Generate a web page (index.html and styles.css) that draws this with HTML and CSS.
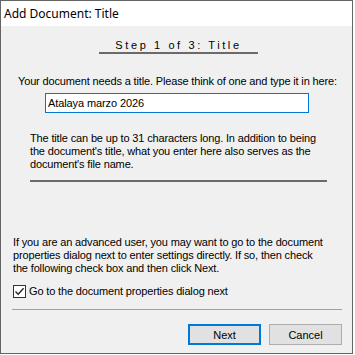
FILE: index.html
```html
<!DOCTYPE html>
<html>

<head>
    <title>Add Document: Title</title>
    <meta name="viewport" content="width=device-width, initial-scale=1.0">
    <link rel="stylesheet" href="styles.css">
</head>

<body>
    <div class="window">
        <div class="titlebar">Add Document: Title</div>
        <div class="content">
            <div class="step">Step 1 of 3: Title</div>

            <p class="ask">Your document needs a title. Please think of one and type it in here:</p>
            <div class="field">Atalaya marzo 2026</div>

            <p class="note">The title can be up to 31 characters long. In addition to being<br>the document's title, what you enter here also serves as the<br>document's file name.</p>
            <div class="rule"></div>

            <p class="advanced">If you are an advanced user, you may want to go to the document<br>properties dialog next to enter settings directly. If so, then check<br>the following check box and then click Next.</p>
            <label class="check">
                <span class="box">
                    <svg width="11" height="11" viewBox="0 0 11 11">
                        <path d="M1.5 5.5 L4.2 8.3 L9.6 2.2" fill="none" stroke="#222" stroke-width="1.3"/>
                    </svg>
                </span>
                Go to the document properties dialog next
            </label>

            <div class="footer">
                <button class="btn default">Next</button>
                <button class="btn">Cancel</button>
            </div>
        </div>
    </div>
</body>

</html>
```

FILE: styles.css
```css
body {
    margin: 0;
    background-color: #fff;
    font-family: 'Liberation Sans', Arial, sans-serif;
    font-size: 11px;
    color: #000;
}

.window {
    width: 351px;
    height: 352px;
    border: 1px solid #646464;
    background-color: #f0f0f0;
    display: flex;
    flex-direction: column;
}

.titlebar {
    height: 25px;
    background-color: #fff;
    padding-left: 3px;
    font-family: 'Noto Sans', sans-serif;
    font-size: 12px;
    line-height: 25px;
    color: #000;
}

.content {
    flex: 1;
    display: flex;
    flex-direction: column;
}

.step {
    margin: 12px 0 0 98px;
    width: 159px;
    text-align: center;
    letter-spacing: 2.6px;
    font-size: 11px;
    line-height: 14px;
    border-bottom: 2px solid #6a6a6a;
}

p {
    margin: 0;
    line-height: 13px;
    letter-spacing: -0.15px;
}

.ask {
    margin: 21px 0 0 17px;
}

.field {
    margin: 5px 0 0 44px;
    width: 260px;
    height: 18px;
    border: 1px solid #0078d7;
    background-color: #fff;
    padding-left: 2px;
    line-height: 18px;
    letter-spacing: -0.1px;
}

.note {
    margin: 19px 0 0 29px;
}

.rule {
    margin: 9px 0 0 29px;
    width: 297px;
    height: 2px;
    background-color: #6a6a6a;
}

.advanced {
    margin: 54px 0 0 12px;
}

.check {
    display: flex;
    align-items: center;
    gap: 3px;
    margin: 10px 0 0 12px;
    line-height: 13px;
    letter-spacing: -0.15px;
}

.box {
    width: 11px;
    height: 11px;
    border: 1px solid #333;
    background-color: #fff;
    display: flex;
}

.footer {
    margin: 11px 10px 0 11px;
    border-top: 1px solid #a0a0a0;
    padding-top: 14px;
    display: flex;
    justify-content: flex-end;
    gap: 8px;
}

.btn {
    width: 73px;
    height: 21px;
    font-family: 'Liberation Sans', Arial, sans-serif;
    font-size: 11px;
    color: #000;
    background-color: #e1e1e1;
    border: 1px solid #adadad;
    padding: 0;
}

.btn.default {
    border: 2px solid #0078d7;
}
```
